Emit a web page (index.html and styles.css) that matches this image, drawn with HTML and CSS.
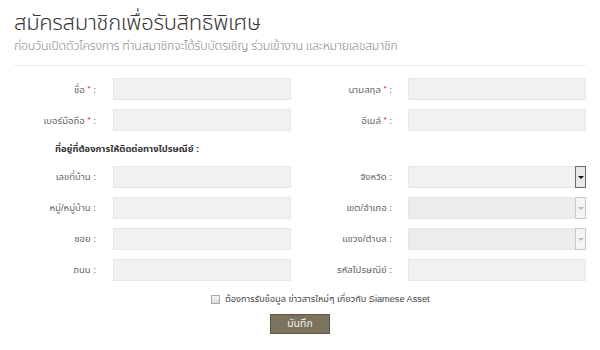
FILE: index.html
```html
<!DOCTYPE html>
<html lang="th">
<head>
    <meta charset="UTF-8">
    <title>สมัครสมาชิก</title>
    <link rel="stylesheet" href="styles.css">
</head>
<body>
    <div class="page">
        <h1 class="title">สมัครสมาชิกเพื่อรับสิทธิพิเศษ</h1>
        <p class="subtitle">ก่อนวันเปิดตัวโครงการ ท่านสมาชิกจะได้รับบัตรเชิญ ร่วมเข้างาน และหมายเลขสมาชิก</p>
        <div class="divider"></div>

        <form class="reg-form">
            <label class="field-label">ชื่อ <span class="req">*</span> :</label>
            <input class="field-input" type="text">
            <label class="field-label">นามสกุล <span class="req">*</span> :</label>
            <input class="field-input" type="text">

            <label class="field-label">เบอร์มือถือ <span class="req">*</span> :</label>
            <input class="field-input" type="text">
            <label class="field-label">อีเมล์ <span class="req">*</span> :</label>
            <input class="field-input" type="text">

            <div class="section-head">ที่อยู่ที่ต้องการให้ติดต่อทางไปรษณีย์ :</div>

            <label class="field-label">เลขที่บ้าน :</label>
            <input class="field-input" type="text">
            <label class="field-label">จังหวัด :</label>
            <div class="fake-select">
                <span class="arrow active"></span>
            </div>

            <label class="field-label">หมู่/หมู่บ้าน :</label>
            <input class="field-input" type="text">
            <label class="field-label">เขต/อำเภอ :</label>
            <div class="fake-select disabled">
                <span class="arrow"></span>
            </div>

            <label class="field-label">ซอย :</label>
            <input class="field-input" type="text">
            <label class="field-label">แขวง/ตำบล :</label>
            <div class="fake-select disabled">
                <span class="arrow"></span>
            </div>

            <label class="field-label">ถนน :</label>
            <input class="field-input" type="text">
            <label class="field-label">รหัสไปรษณีย์ :</label>
            <input class="field-input" type="text">
        </form>

        <div class="news-row">
            <span class="check"></span>
            <span>ต้องการรับข้อมูล ข่าวสารใหม่ๆ เกี่ยวกับ Siamese Asset</span>
        </div>

        <div class="actions">
            <button class="save-button" type="button">บันทึก</button>
        </div>
    </div>
</body>
</html>
```

FILE: styles.css
```css
* {
    margin: 0;
    padding: 0;
    box-sizing: border-box;
}

body {
    font-family: 'Liberation Sans', 'Noto Sans Thai', 'Noto Sans', sans-serif;
    background: #ffffff;
    color: #555;
}

.page {
    width: 600px;
    padding: 0 14px;
}

.title {
    font-family: 'Noto Sans Thai', 'Noto Sans', sans-serif;
    font-size: 22px;
    font-weight: 300;
    color: #3a3a3a;
    line-height: 30px;
    padding-top: 9px;
    letter-spacing: -0.3px;
}

.subtitle {
    font-family: 'Noto Sans Thai', 'Noto Sans', sans-serif;
    font-size: 12.3px;
    font-weight: 300;
    color: #8a8a8a;
    line-height: 14px;
    margin-top: 1px;
    letter-spacing: -0.2px;
}

.divider {
    height: 1px;
    background: #ececec;
    margin-top: 11px;
}

.reg-form {
    display: grid;
    grid-template-columns: 99px 178px 117px 178px;
    grid-template-rows: 22px 22px 17px repeat(4, 22px);
    row-gap: 9px;
    margin-top: 12px;
}

.field-label {
    font-size: 9.6px;
    color: #666;
    text-align: right;
    padding-right: 17px;
    line-height: 22px;
    white-space: nowrap;
}

.field-label:nth-of-type(even) {
    padding-right: 16px;
}

.req {
    color: #e02020;
    font-size: 8px;
    vertical-align: 2px;
}

.field-input {
    height: 22px;
    background: #f1f1f1;
    border: 1px solid #e6e6e6;
    outline: none;
}

.section-head {
    grid-column: 1 / -1;
    font-size: 9.4px;
    font-weight: 700;
    color: #333;
    padding-left: 41px;
    line-height: 17px;
}

.fake-select {
    position: relative;
    height: 22px;
    background: #f1f1f1;
    border: 1px solid #e6e6e6;
}

.fake-select.disabled {
    background: #ececec;
}

.arrow {
    position: absolute;
    top: -1px;
    right: -1px;
    width: 11px;
    height: 22px;
    border: 1px solid #c8c8c8;
    background: #f4f4f4;
}

.arrow::after {
    content: '';
    position: absolute;
    left: 2px;
    top: 9px;
    border-left: 3px solid transparent;
    border-right: 3px solid transparent;
    border-top: 3px solid #bbb;
}

.arrow.active {
    border-color: #6a6a6a;
    background: #e8e8e8;
}

.arrow.active::after {
    border-top-color: #111;
}

.news-row {
    display: flex;
    align-items: center;
    gap: 5px;
    margin-top: 11px;
    margin-left: 197px;
    font-size: 9.2px;
    color: #444;
    line-height: 14px;
}

.check {
    width: 9px;
    height: 9px;
    border: 1px solid #a8a8a8;
    background: linear-gradient(#f6f6f6, #dcdcdc);
}

.actions {
    display: flex;
    justify-content: center;
    margin-top: 8px;
}

.save-button {
    width: 60px;
    height: 20px;
    background: #7b735d;
    border: 1px solid #5e5746;
    color: #f2f2ee;
    font-family: inherit;
    font-size: 10.5px;
    cursor: pointer;
}
```
